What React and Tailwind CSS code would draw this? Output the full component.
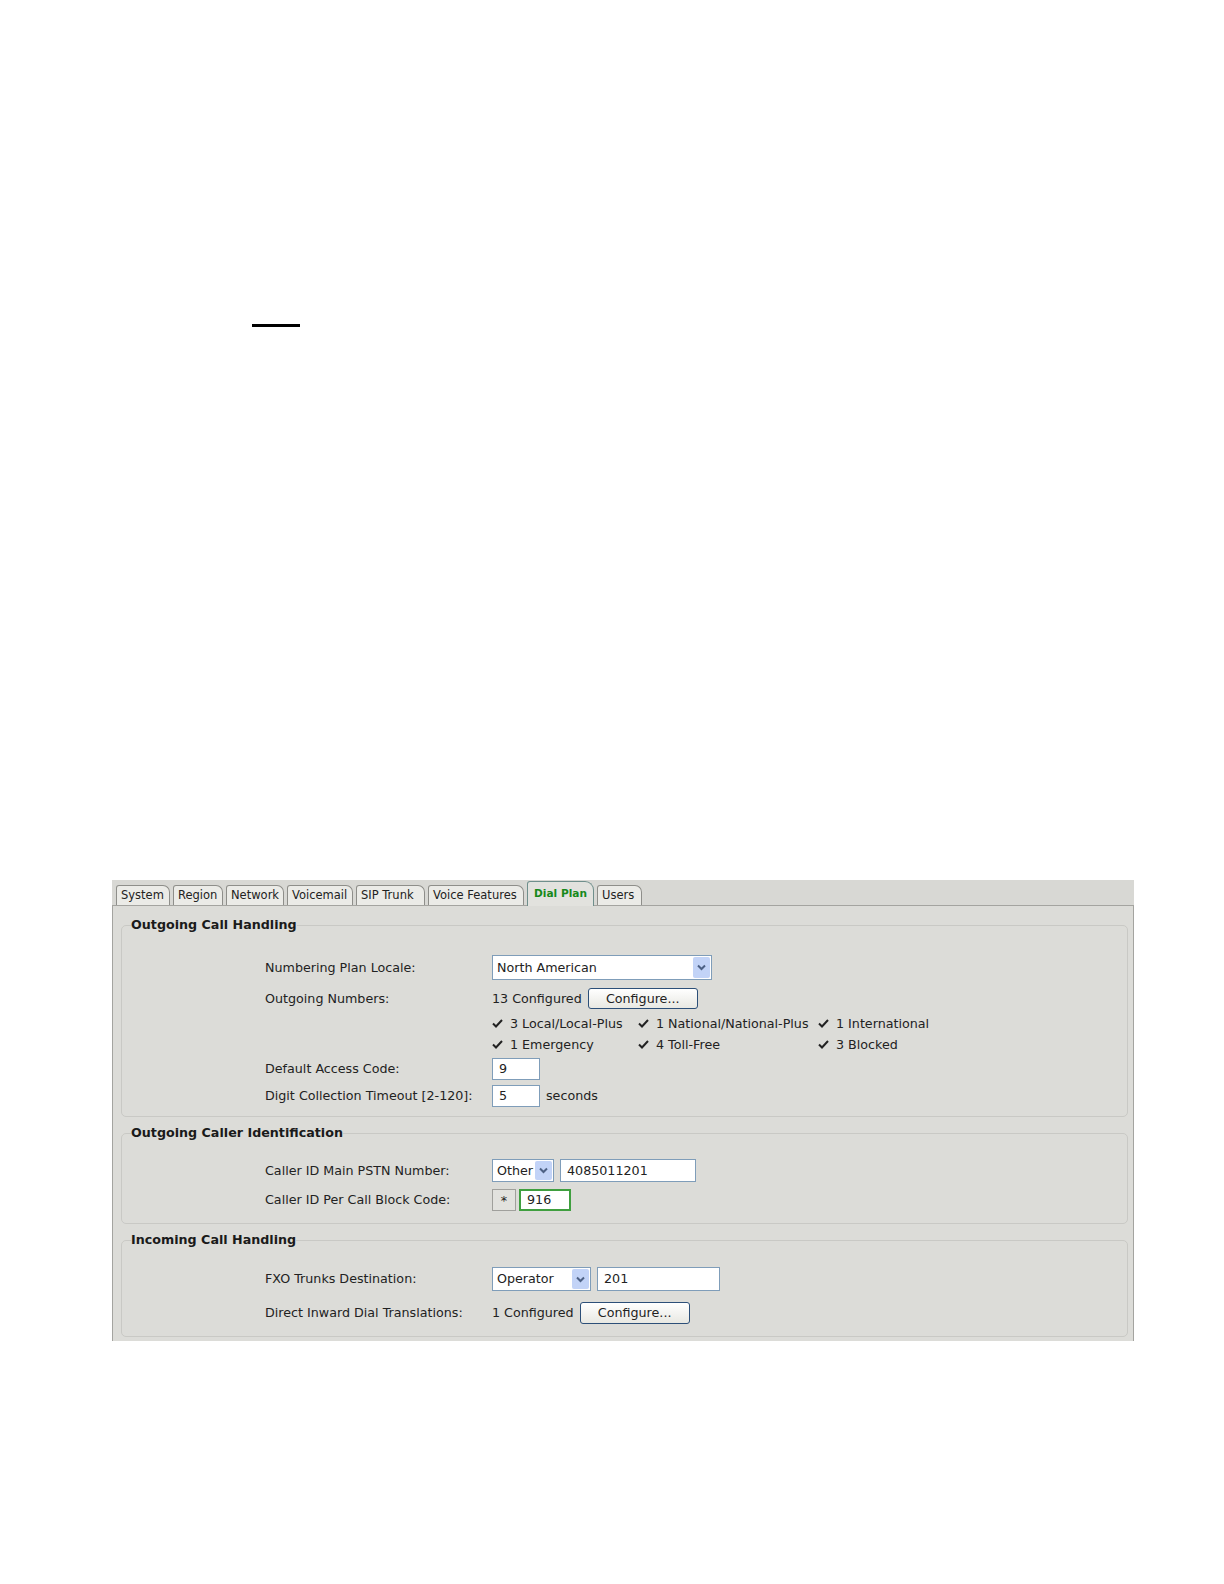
import React from "react"

const tabs = [
  { name: "System", w: "w-[54px]" },
  { name: "Region", w: "w-[50px]" },
  { name: "Network", w: "w-[58px]" },
  { name: "Voicemail", w: "w-[66px]" },
  { name: "SIP Trunk", w: "w-[69px]" },
  { name: "Voice Features", w: "w-[96px]" },
  { name: "Dial Plan", w: "w-[67px]", active: true },
  { name: "Users", w: "w-[45px]" },
]

const Chevron = () => (
  <svg width="9" height="7" viewBox="0 0 9 7">
    <polyline points="1,1.5 4.5,5 8,1.5" fill="none" stroke="#4d6185" strokeWidth="2" />
  </svg>
)

const Check = () => (
  <svg width="11" height="9" viewBox="0 0 11 9" className="mr-[7px] shrink-0">
    <polyline points="1,4.5 4,7.5 10,1" fill="none" stroke="#222" strokeWidth="2" />
  </svg>
)

const Select = ({ value, w }) => (
  <div className={`flex items-stretch bg-white border border-[#7f9db9] h-full ${w}`}>
    <span className="flex-1 flex items-center pl-[4px]">{value}</span>
    <span className="w-[17px] m-[1px] bg-[#c2d3f7] rounded-[2px] flex items-center justify-center">
      <Chevron />
    </span>
  </div>
)

const TextBox = ({ value, w, green }) => (
  <div
    className={`h-full bg-white flex items-center pl-[6px] ${w} ${
      green ? "border-2 border-[#3f9f3f]" : "border border-[#7f9db9]"
    }`}
  >
    {value}
  </div>
)

const ConfigureButton = ({ className }) => (
  <div
    className={`h-full w-[110px] rounded-[3px] border border-[#2c4f78] bg-gradient-to-b from-white to-[#e8e8e2] flex items-center justify-center ${className}`}
  >
    Configure...
  </div>
)

const Row = ({ label, className, children }) => (
  <div className={`flex items-center pl-[143px] ${className}`}>
    <div className="w-[227px] shrink-0">{label}</div>
    <div className="flex items-center h-full">{children}</div>
  </div>
)

const Section = ({ title, className, children }) => (
  <fieldset className={`border border-[#c9c9c5] rounded-[5px] mr-[5px] ${className}`}>
    <legend className="ml-[9px] font-bold leading-[16px] text-[#1a1a1a]">{title}</legend>
    {children}
  </fieldset>
)

export default function App() {
  return (
    <div className="h-[1584px] bg-white overflow-hidden font-['DejaVu_Sans',Verdana,sans-serif] text-[12.7px] text-[#222]">
      <div className="ml-[252px] mt-[324px] w-[48px] h-[3px] bg-black" />

      <div className="ml-[112px] mt-[553px] w-[1022px]">
        {/* tab strip */}
        <div className="h-[26px] bg-[#d8d8d4] flex items-end gap-[3px] pl-[4px] border-b border-[#a4a4a0]">
          {tabs.map((t) =>
            t.active ? (
              <div
                key={t.name}
                className={`${t.w} h-[25px] -mb-[1px] bg-[#e2e2de] border border-b-0 border-[#6f8f8c] rounded-tl-[3px] rounded-tr-[9px] flex items-center pl-[6px] text-[10.6px] font-bold text-[#17891a]`}
              >
                {t.name}
              </div>
            ) : (
              <div
                key={t.name}
                className={`${t.w} h-[20px] bg-[#ebebe7] border border-b-0 border-[#8e8e8a] rounded-tl-[3px] rounded-tr-[7px] flex items-center pl-[4px] text-[11.5px] text-[#222]`}
              >
                {t.name}
              </div>
            ),
          )}
        </div>

        {/* panel body */}
        <div className="bg-[#dcdcd8] border-x border-[#a4a4a0] pl-[8px] pt-[11px] pb-[4px]">
          <Section title="Outgoing Call Handling" className="pb-[9px]">
            <Row label="Numbering Plan Locale:" className="h-[25px] mt-[22px]">
              <Select value="North American" w="w-[220px]" />
            </Row>
            <Row label="Outgoing Numbers:" className="h-[21px] mt-[8px]">
              <span>13 Configured</span>
              <ConfigureButton className="ml-[6px]" />
            </Row>
            <Row label="" className="h-[20px] mt-[5px]">
              <div className="w-[146px] flex items-center">
                <Check />3 Local/Local-Plus
              </div>
              <div className="w-[180px] flex items-center">
                <Check />1 National/National-Plus
              </div>
              <div className="flex items-center">
                <Check />1 International
              </div>
            </Row>
            <Row label="" className="h-[20px] mt-[1px]">
              <div className="w-[146px] flex items-center">
                <Check />1 Emergency
              </div>
              <div className="w-[180px] flex items-center">
                <Check />4 Toll-Free
              </div>
              <div className="flex items-center">
                <Check />3 Blocked
              </div>
            </Row>
            <Row label="Default Access Code:" className="h-[22px] mt-[3px]">
              <TextBox value="9" w="w-[48px]" />
            </Row>
            <Row label="Digit Collection Timeout [2-120]:" className="h-[22px] mt-[5px]">
              <TextBox value="5" w="w-[48px]" />
              <span className="ml-[6px]">seconds</span>
            </Row>
          </Section>

          <Section title="Outgoing Caller Identification" className="mt-[8px] pb-[12px]">
            <Row label="Caller ID Main PSTN Number:" className="h-[23px] mt-[18px]">
              <Select value="Other" w="w-[62px]" />
              <div className="ml-[6px] h-full">
                <TextBox value="4085011201" w="w-[136px]" />
              </div>
            </Row>
            <Row label="Caller ID Per Call Block Code:" className="h-[22px] mt-[7px]">
              <div className="w-[24px] h-full bg-[#e2e2de] border border-[#a0a09c] flex items-start justify-center pt-[1px]">
                *
              </div>
              <div className="ml-[3px] h-full">
                <TextBox value="916" w="w-[52px]" green />
              </div>
            </Row>
          </Section>

          <Section title="Incoming Call Handling" className="mt-[8px] pb-[12px]">
            <Row label="FXO Trunks Destination:" className="h-[24px] mt-[19px]">
              <Select value="Operator" w="w-[99px]" />
              <div className="ml-[6px] h-full">
                <TextBox value="201" w="w-[123px]" />
              </div>
            </Row>
            <Row label="Direct Inward Dial Translations:" className="h-[22px] mt-[11px]">
              <span>1 Configured</span>
              <ConfigureButton className="ml-[6px]" />
            </Row>
          </Section>
        </div>
      </div>
    </div>
  )
}
